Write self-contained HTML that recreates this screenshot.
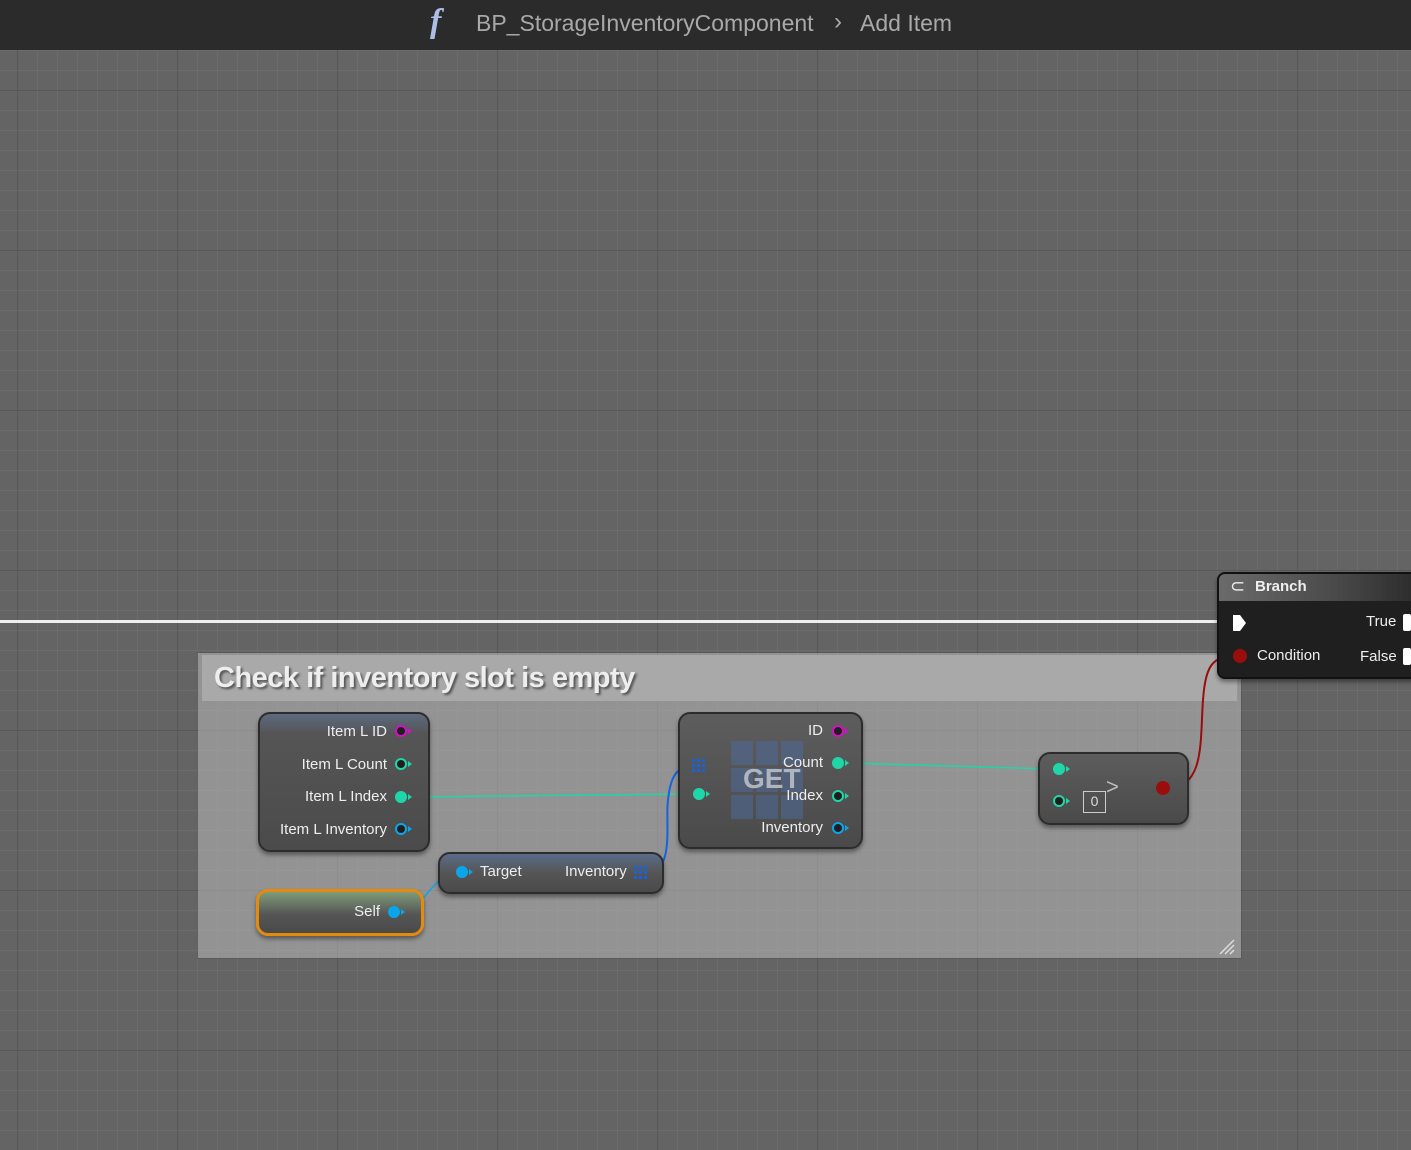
<!DOCTYPE html>
<html><head><meta charset="utf-8"><style>
*{margin:0;padding:0;box-sizing:border-box}
body{width:1411px;height:1150px;overflow:hidden;position:relative;font-family:"Liberation Sans",sans-serif;
background-color:#646464;
background-image:
linear-gradient(to right,#585858 1px,transparent 1px),
linear-gradient(to bottom,#585858 1px,transparent 1px),
linear-gradient(to right,#6c6c6c 1px,transparent 1px),
linear-gradient(to bottom,#6c6c6c 1px,transparent 1px);
background-size:160px 160px,160px 160px,20px 20px,20px 20px;
background-position:17px 90px,17px 90px,17px 10px,17px 10px;}
.hdr{position:absolute;left:0;top:0;width:1411px;height:50px;background:#2b2b2b;color:#a9a9a9;font-size:23px}
.abs{position:absolute}
.comment{position:absolute;left:198px;top:653px;width:1043px;height:305px;background:rgba(185,185,185,.55);box-shadow:0 0 0 1px rgba(0,0,0,.1)}
.chead{position:absolute;left:4px;top:2px;width:1035px;height:46px;background:#a9a9a9}
.ctitle{position:absolute;left:16px;top:9px;font-size:29px;font-weight:bold;color:#eee;text-shadow:2px 2px 2px #555;letter-spacing:-.5px}
.node{position:absolute;border-radius:12px;background:linear-gradient(#5d5d5d,#4a4a4a);border:2px solid #2c2c2c;box-shadow:0 3px 4px rgba(0,0,0,.4)}
.lbl{position:absolute;color:#eee;font-size:15px;white-space:nowrap}
.pin{position:absolute;width:12px;height:12px;border-radius:50%;border:2.5px solid;background:#1e1e1e}
.pin.f{background:currentColor}
.pin::after{content:"";position:absolute;right:-7px;top:1px;border-left:4px solid;border-left-color:inherit;border-top:3px solid transparent;border-bottom:3px solid transparent}
</style></head><body>
<div class="hdr">
<div class="abs" style="left:430px;top:3px;font-family:'Liberation Serif',serif;font-style:italic;font-weight:bold;font-size:34px;color:#aebde8">f</div>
<div class="abs" style="left:476px;top:10px">BP_StorageInventoryComponent</div>
<div class="abs" style="left:834px;top:8px;font-size:24px">›</div>
<div class="abs" style="left:860px;top:10px">Add Item</div>
</div>

<div class="abs" style="left:0;top:620px;width:1232px;height:3px;background:#eee"></div>

<div class="comment"><div class="chead"></div><div class="ctitle">Check if inventory slot is empty</div>
<svg class="abs" style="left:1020px;top:285px" width="18" height="18"><path d="M2 16L16 2M7 16L16 7M12 16L16 12" stroke="#ddd" stroke-width="1.5"/></svg>
</div>

<svg class="abs" style="left:0;top:0" width="1411" height="1150">
<path d="M408 797 L690 794" stroke="#1fd6a8" stroke-width="1.5" fill="none"/>
<path d="M846 763 L1050 769" stroke="#1fd6a8" stroke-width="1.5" fill="none"/>
<path d="M648 872 C675 872 665 820 668 800 C671 770 680 766 698 766" stroke="#1463e0" stroke-width="2" fill="none"/>
<path d="M400 912 C425 912 430 872 462 872" stroke="#0aa5ea" stroke-width="1.5" fill="none"/>
<path d="M1168 788 C1205 788 1200 740 1203 700 C1206 660 1215 656 1240 656" stroke="#9a0d0d" stroke-width="2" fill="none"/>
</svg>

<!-- Item L node -->
<div class="node" style="left:258px;top:712px;width:172px;height:140px;background:linear-gradient(#5d6a80 0,#555 14%,#4b4b4b)"></div>
<div class="lbl" style="right:1024px;top:723px">Item L ID</div><div class="pin" style="left:395px;top:725px;color:#d40fc4;border-color:#d40fc4"></div>
<div class="lbl" style="right:1024px;top:756px">Item L Count</div><div class="pin" style="left:395px;top:758px;color:#1fd6a8;border-color:#1fd6a8"></div>
<div class="lbl" style="right:1024px;top:788px">Item L Index</div><div class="pin f" style="left:395px;top:791px;color:#1fd6a8;border-color:#1fd6a8"></div>
<div class="lbl" style="right:1024px;top:821px">Item L Inventory</div><div class="pin" style="left:395px;top:823px;color:#0aa5ea;border-color:#0aa5ea"></div>

<!-- Self -->
<div class="node" style="left:256px;top:889px;width:168px;height:47px;border:3px solid #e58a0a;background:linear-gradient(#7f9b7a,#555 55%,#4a4a4a)"></div>
<div class="lbl" style="right:1031px;top:903px">Self</div><div class="pin f" style="left:388px;top:906px;color:#0aa5ea;border-color:#0aa5ea"></div>

<!-- Target/Inventory -->
<div class="node" style="left:438px;top:852px;width:226px;height:42px;background:linear-gradient(#5a6c8a,#555 50%,#4a4a4a)"></div>
<div class="pin f" style="left:456px;top:866px;color:#0aa5ea;border-color:#0aa5ea"></div>
<div class="lbl" style="left:480px;top:863px">Target</div>
<div class="lbl" style="left:565px;top:863px">Inventory</div>
<svg class="abs" style="left:634px;top:866px" width="14" height="14"><g fill="#1463e0"><rect x="0" y="0" width="3" height="3"/><rect x="5" y="0" width="3" height="3"/><rect x="10" y="0" width="3" height="3"/><rect x="0" y="5" width="3" height="3"/><rect x="5" y="5" width="3" height="3"/><rect x="10" y="5" width="3" height="3"/><rect x="0" y="10" width="3" height="3"/><rect x="5" y="10" width="3" height="3"/><rect x="10" y="10" width="3" height="3"/></g></svg>

<!-- GET -->
<div class="node" style="left:678px;top:712px;width:185px;height:137px"></div>
<svg class="abs" style="left:731px;top:741px" width="80" height="78"><g fill="#4e6b9a" opacity=".55"><rect x="0" y="0" width="22" height="24"/><rect x="25" y="0" width="22" height="24"/><rect x="50" y="0" width="22" height="24"/><rect x="0" y="27" width="22" height="24"/><rect x="25" y="27" width="22" height="24"/><rect x="50" y="27" width="22" height="24"/><rect x="0" y="54" width="22" height="24"/><rect x="25" y="54" width="22" height="24"/><rect x="50" y="54" width="22" height="24"/></g></svg>
<div class="lbl" style="left:743px;top:763px;font-size:28px;color:#b0b4bc;font-weight:bold">GET</div>
<svg class="abs" style="left:692px;top:759px" width="14" height="14"><g fill="#1463e0"><rect x="0" y="0" width="3" height="3"/><rect x="5" y="0" width="3" height="3"/><rect x="10" y="0" width="3" height="3"/><rect x="0" y="5" width="3" height="3"/><rect x="5" y="5" width="3" height="3"/><rect x="10" y="5" width="3" height="3"/><rect x="0" y="10" width="3" height="3"/><rect x="5" y="10" width="3" height="3"/><rect x="10" y="10" width="3" height="3"/></g></svg>
<div class="pin f" style="left:693px;top:788px;color:#1fd6a8;border-color:#1fd6a8"></div>
<div class="lbl" style="right:588px;top:722px">ID</div><div class="pin" style="left:832px;top:725px;color:#d40fc4;border-color:#d40fc4"></div>
<div class="lbl" style="right:588px;top:754px">Count</div><div class="pin f" style="left:832px;top:757px;color:#1fd6a8;border-color:#1fd6a8"></div>
<div class="lbl" style="right:588px;top:787px">Index</div><div class="pin" style="left:832px;top:790px;color:#1fd6a8;border-color:#1fd6a8"></div>
<div class="lbl" style="right:588px;top:819px">Inventory</div><div class="pin" style="left:832px;top:822px;color:#0aa5ea;border-color:#0aa5ea"></div>

<!-- > node -->
<div class="node" style="left:1038px;top:752px;width:151px;height:73px"></div>
<div class="pin f" style="left:1053px;top:763px;color:#1fd6a8;border-color:#1fd6a8"></div>
<div class="pin" style="left:1053px;top:795px;color:#1fd6a8;border-color:#1fd6a8"></div>
<div class="abs" style="left:1083px;top:791px;width:23px;height:22px;border:1.5px solid #ccc;color:#ddd;font-size:14px;text-align:center;line-height:19px">0</div>
<div class="lbl" style="left:1106px;top:774px;font-size:22px;color:#bbb">&gt;</div>
<div class="abs" style="left:1156px;top:781px;width:14px;height:14px;border-radius:50%;background:#9a0d0d"></div>

<!-- Branch -->
<div class="abs" style="left:1217px;top:572px;width:200px;height:107px;border-radius:8px 0 0 8px;background:#1f1f1f;border:2px solid #111;box-shadow:0 3px 4px rgba(0,0,0,.4)"></div>
<div class="abs" style="left:1219px;top:574px;width:192px;height:27px;border-radius:6px 0 0 0;background:linear-gradient(to right,#6b6b6b,#4a4a4a 60%,#2e2e2e)"></div>
<div class="lbl" style="left:1230px;top:576px;font-size:18px">⊂</div>
<div class="lbl" style="left:1255px;top:578px;font-weight:bold">Branch</div>
<svg class="abs" style="left:1232px;top:614px" width="16" height="18"><path d="M1 1H8L14 9L8 17H1Z" fill="#fff"/></svg>
<div class="lbl" style="left:1366px;top:613px">True</div>
<div class="abs" style="left:1403px;top:614px;width:8px;height:17px;background:#fff;border-radius:2px"></div>
<div class="abs" style="left:1233px;top:649px;width:14px;height:14px;border-radius:50%;background:#9a0d0d"></div>
<div class="lbl" style="left:1257px;top:647px">Condition</div>
<div class="lbl" style="left:1360px;top:648px">False</div>
<div class="abs" style="left:1403px;top:648px;width:8px;height:17px;background:#fff;border-radius:2px"></div>
</body></html>
